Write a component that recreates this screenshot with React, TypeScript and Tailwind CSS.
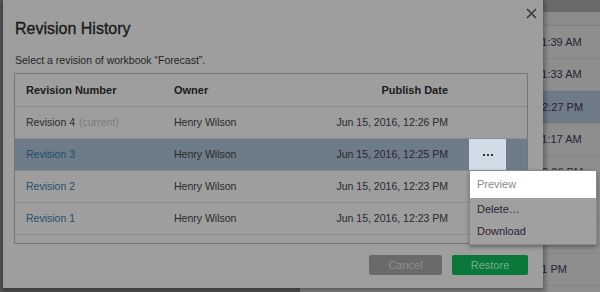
const bgTimes = ['11:39 AM', '11:33 AM', '12:27 PM', '11:17 AM', '12:26 PM', '12:25 PM', '12:23 PM', '11 PM'];

const revisions = [
  { name: 'Revision 4', current: true, date: 'Jun 15, 2016, 12:26 PM' },
  { name: 'Revision 3', selected: true, date: 'Jun 15, 2016, 12:25 PM' },
  { name: 'Revision 2', date: 'Jun 15, 2016, 12:23 PM' },
  { name: 'Revision 1', date: 'Jun 15, 2016, 12:23 PM' },
];

const App = () => {
  return (
    <div className="relative w-[600px] h-[292px] overflow-hidden bg-[#5b5b5b] font-['Liberation_Sans',Arial,sans-serif] text-[10.5px] text-[#222]">
      {/* Page behind the dialog */}
      <div className="flex h-full">
        <div className="w-[300px] bg-[#5b5b5b]" />
        <div className="flex-1 flex flex-col bg-[#8e8e8e]">
          <div className="h-[12px] bg-[#6a6a6a]" />
          <div className="h-[14px] bg-[#8b8b8b] border-b border-[#818181]" />
          {bgTimes.map((t, i) => (
            <div
              key={t + i}
              className={`h-[32.5px] flex items-center pl-[236px] border-b border-[#848484] text-[11px] text-[#2a2232] ${i === 2 ? 'bg-[#6e7a87]' : ''}`}
            >
              {t}
            </div>
          ))}
        </div>
      </div>

      {/* Dialog */}
      <div className="absolute left-[3px] top-0 w-[540px] h-[288px] bg-[#9e9e9e] pl-[11px] pr-[15px] shadow-[0_2px_5px_2px_rgba(0,0,0,0.35)]">
        <button className="absolute left-[523px] top-[8px] w-[11px] h-[11px] flex items-center justify-center">
          <svg width="11" height="11" viewBox="0 0 11 11" fill="none">
            <path d="M1 1 L10 10 M10 1 L1 10" stroke="#3a3a3a" strokeWidth="1.6" />
          </svg>
        </button>

        <h2 className="pt-[19px] pl-[1px] h-[39px] text-[16px] leading-[20px] text-[#1a1a1a] [-webkit-text-stroke:0.35px_#1a1a1a]">
          Revision History
        </h2>
        <p className="mt-[14px] pl-[1px] h-[14px] leading-[14px] text-[#252525]">
          Select a revision of workbook “Forecast”.
        </p>

        {/* Table */}
        <div className="mt-[6px] h-[171px] border border-[#767676] overflow-hidden">
          <div className="flex items-center h-[33px] pl-[11px] border-b border-[#888] font-bold text-[11px] text-[#1c1c1c]">
            <div className="w-[148px]">Revision Number</div>
            <div className="w-[120px]">Owner</div>
            <div className="w-[154px] text-right">Publish Date</div>
          </div>
          {revisions.map((r) => (
            <div
              key={r.name}
              className={`flex items-center h-[32px] pl-[11px] border-b border-[#8c8c8c] ${r.selected ? 'bg-[#6e7b88]' : ''}`}
            >
              <div className={`w-[148px] ${r.current ? 'text-[#2a2a2a]' : 'text-[#1f4e6a]'}`}>
                {r.name}
                {r.current && <span className="ml-[4px] text-[#7c7c7c]">(current)</span>}
              </div>
              <div className="w-[120px] text-[#2a2a2a]">Henry Wilson</div>
              <div className="w-[154px] text-right text-[#2c2630]">{r.date}</div>
              {r.selected && (
                <div className="ml-[21px] w-[37px] h-full bg-[#d2dce6] flex items-center justify-center gap-[2px]">
                  <span className="w-[2px] h-[2px] bg-[#333]" />
                  <span className="w-[2px] h-[2px] bg-[#333]" />
                  <span className="w-[2px] h-[2px] bg-[#333]" />
                </div>
              )}
            </div>
          ))}
        </div>

        {/* Footer */}
        <div className="mt-[11px] flex justify-end gap-[10px]">
          <button className="w-[73px] h-[20px] rounded-[2px] bg-[#6a6a6a] text-[#8e8e8e] text-[11px]">Cancel</button>
          <button className="w-[76px] h-[20px] rounded-[2px] bg-[#0b773a] text-[#6fb38b] text-[11px]">Restore</button>
        </div>
      </div>

      {/* Row actions menu */}
      <div className="absolute left-[469px] top-[170px] w-[128px] h-[75px] bg-[#a0a0a0] border border-[#8a8a8a] shadow-[0_2px_4px_rgba(0,0,0,0.35)] text-[11px]">
        <div className="h-[27px] bg-white flex items-center pl-[7px] text-[#8a8a8a]">Preview</div>
        <div className="h-[22px] flex items-center pl-[7px] text-[#2a2430]">Delete…</div>
        <div className="h-[22px] flex items-center pl-[7px] text-[#2a2430]">Download</div>
      </div>
    </div>
  );
};

export default App;
